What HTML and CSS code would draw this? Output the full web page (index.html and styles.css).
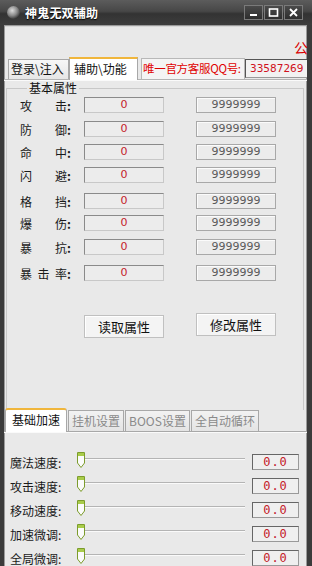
FILE: index.html
```html
<!DOCTYPE html>
<html lang="zh">
<head>
  <meta charset="UTF-8" />
  <title>神鬼无双辅助</title>
  <link rel="stylesheet" href="styles.css">
</head>
<body>
<div class="window">
  <div class="titlebar">
    <span class="app-icon"></span>
    <span class="title">神鬼无双辅助</span>
    <div class="win-btns">
      <span class="win-btn"><svg width="11" height="9" viewBox="0 0 11 9"><rect x="2" y="6" width="7" height="2" fill="#fff"/></svg></span>
      <span class="win-btn"><svg width="11" height="9" viewBox="0 0 11 9"><rect x="1.5" y="1" width="8" height="7" fill="none" stroke="#fff" stroke-width="1.6"/></svg></span>
      <span class="win-btn"><svg width="11" height="9" viewBox="0 0 11 9"><path d="M2 1 L9 8 M9 1 L2 8" stroke="#fff" stroke-width="1.8"/></svg></span>
    </div>
  </div>

  <div class="client">
    <div class="notice"><span>公告</span></div>

    <div class="top-tabs">
      <span class="tab">登录\注入</span>
      <span class="tab active">辅助\功能</span>
      <span class="qq-label">唯一官方客服QQ号:</span>
      <span class="qq-input">33587269</span>
    </div>

    <div class="panel">
      <fieldset class="group">
        <legend>基本属性</legend>
        <div class="row"><span class="label"><i>攻</i><i>击</i></span><span class="colon">:</span><span class="box">0</span><span class="box max">9999999</span></div>
        <div class="row"><span class="label"><i>防</i><i>御</i></span><span class="colon">:</span><span class="box">0</span><span class="box max">9999999</span></div>
        <div class="row gap-s"><span class="label"><i>命</i><i>中</i></span><span class="colon">:</span><span class="box">0</span><span class="box max">9999999</span></div>
        <div class="row gap-s"><span class="label"><i>闪</i><i>避</i></span><span class="colon">:</span><span class="box">0</span><span class="box max">9999999</span></div>
        <div class="row gap-l"><span class="label"><i>格</i><i>挡</i></span><span class="colon">:</span><span class="box">0</span><span class="box max">9999999</span></div>
        <div class="row gap-xs"><span class="label"><i>爆</i><i>伤</i></span><span class="colon">:</span><span class="box">0</span><span class="box max">9999999</span></div>
        <div class="row"><span class="label"><i>暴</i><i>抗</i></span><span class="colon">:</span><span class="box">0</span><span class="box max">9999999</span></div>
        <div class="row gap-l"><span class="label"><i>暴</i><i>击</i><i>率</i></span><span class="colon">:</span><span class="box">0</span><span class="box max">9999999</span></div>

        <div class="actions">
          <button class="btn">读取属性</button>
          <button class="btn up">修改属性</button>
        </div>
      </fieldset>
    </div>

    <div class="bottom-tabs">
      <span class="tab active">基础加速</span>
      <span class="tab dim">挂机设置</span>
      <span class="tab dim">BOOS设置</span>
      <span class="tab dim">全自动循环</span>
    </div>

    <div class="sliders">
      <div class="srow"><span class="slabel">魔法速度:</span><span class="track"><svg class="thumb" width="8" height="16" viewBox="0 0 8 16"><path d="M0.5 0.5 H7.5 V11 L4 15.5 L0.5 11 Z" fill="#fbfbfb" stroke="#7c9c2c"/><rect x="1" y="1" width="6" height="3" fill="#a9cc4a"/></svg></span><span class="val">0.0</span></div>
      <div class="srow"><span class="slabel">攻击速度:</span><span class="track"><svg class="thumb" width="8" height="16" viewBox="0 0 8 16"><path d="M0.5 0.5 H7.5 V11 L4 15.5 L0.5 11 Z" fill="#fbfbfb" stroke="#7c9c2c"/><rect x="1" y="1" width="6" height="3" fill="#a9cc4a"/></svg></span><span class="val">0.0</span></div>
      <div class="srow"><span class="slabel">移动速度:</span><span class="track"><svg class="thumb" width="8" height="16" viewBox="0 0 8 16"><path d="M0.5 0.5 H7.5 V11 L4 15.5 L0.5 11 Z" fill="#fbfbfb" stroke="#7c9c2c"/><rect x="1" y="1" width="6" height="3" fill="#a9cc4a"/></svg></span><span class="val">0.0</span></div>
      <div class="srow"><span class="slabel">加速微调:</span><span class="track"><svg class="thumb" width="8" height="16" viewBox="0 0 8 16"><path d="M0.5 0.5 H7.5 V11 L4 15.5 L0.5 11 Z" fill="#fbfbfb" stroke="#7c9c2c"/><rect x="1" y="1" width="6" height="3" fill="#a9cc4a"/></svg></span><span class="val">0.0</span></div>
      <div class="srow"><span class="slabel">全局微调:</span><span class="track"><svg class="thumb" width="8" height="16" viewBox="0 0 8 16"><path d="M0.5 0.5 H7.5 V11 L4 15.5 L0.5 11 Z" fill="#fbfbfb" stroke="#7c9c2c"/><rect x="1" y="1" width="6" height="3" fill="#a9cc4a"/></svg></span><span class="val">0.0</span></div>
    </div>
  </div>
</div>
</body>
</html>
```

FILE: styles.css
```css
* {
  box-sizing: border-box;
}

body {
  margin: 0;
  padding: 0;
  overflow: hidden;
  background: #3b3b3b;
  font-family: "Noto Sans CJK SC", "DejaVu Sans", sans-serif;
  font-size: 12px;
  color: #1a1a1a;
}

.window {
  width: 312px;
  height: 566px;
  display: flex;
  flex-direction: column;
}

/* title bar */
.titlebar {
  height: 25px;
  flex: none;
  display: flex;
  align-items: center;
  padding: 0 9px 0 7px;
  background: linear-gradient(#5c5c5c, #474747 45%, #333 55%, #3d3d3d);
  color: #fff;
}

.app-icon {
  flex: none;
  width: 13px;
  height: 13px;
  border-radius: 50%;
  background: radial-gradient(circle at 40% 35%, #ddd, #888 45%, #2a2a2a 80%);
  margin-right: 5px;
}

.title {
  font-weight: bold;
  font-size: 12px;
  letter-spacing: 0.2px;
  text-shadow: 0 1px 1px #000;
  white-space: nowrap;
}

.win-btns {
  margin-left: auto;
  display: flex;
  gap: 1px;
}

.win-btn {
  flex: none;
  width: 19px;
  height: 15px;
  display: flex;
  align-items: center;
  justify-content: center;
  border: 1px solid #7a7a7a;
  background: linear-gradient(#4a4a4a, #2e2e2e);
}

/* client area */
.client {
  flex: 1;
  background: #e9e9e9;
  border-left: 4px solid #3b3b3b;
  border-right: 5px solid #3b3b3b;
  box-shadow: inset 1px 0 #9a9a9a, inset -1px 0 #9a9a9a, inset 0 1px #9a9a9a, inset 0 2px #d8d8d8;
  overflow: hidden;
}

.notice {
  height: 33px;
  padding: 12px 0 0 290px;
  color: #d80000;
  font-size: 14px;
  white-space: nowrap;
  overflow: hidden;
}

.top-tabs {
  height: 21px;
  display: flex;
  align-items: flex-end;
  padding-left: 4px;
  position: relative;
  z-index: 1;
  white-space: nowrap;
}

.tab {
  flex: none;
  height: 20px;
  line-height: 18px;
  padding: 0 3px;
  border: 1px solid #a8a8a8;
  border-bottom: none;
  background: linear-gradient(#f7f7f7, #e6e6e6);
  color: #111;
  white-space: nowrap;
}

.top-tabs .tab:first-child {
  width: 61px;
  padding: 0 2px;
}

.tab.active {
  height: 23px;
  margin-bottom: -1px;
  background: #fff;
  border-top: 2px solid #f0b63c;
  line-height: 19px;
  padding: 0 4px;
}

.top-tabs .tab.active {
  width: 69px;
}

.qq-label {
  flex: none;
  height: 21px;
  width: 104px;
  margin-left: 3px;
  line-height: 19px;
  color: #e00000;
  background: #f4f4f4;
  border: 1px solid #b8b8b8;
  border-bottom: none;
  padding-left: 1px;
  font-size: 11.5px;
  letter-spacing: -0.3px;
  white-space: nowrap;
}

.qq-input {
  flex: none;
  height: 19px;
  width: 64px;
  margin-bottom: 1px;
  line-height: 16px;
  padding-left: 4px;
  color: #d01020;
  background: #f2f2f2;
  border: 1px solid #9a9a9a;
  border-top-color: #555;
  border-left-color: #555;
  font-family: "DejaVu Sans", sans-serif;
  font-size: 10.5px;
  white-space: nowrap;
}

.panel {
  height: 329px;
  border-top: 1px solid #b4b4b4;
  box-shadow: inset 0 1px #fafafa;
  padding: 0 3px 0 2px;
}

.group {
  margin: 0;
  padding: 1px 0 0 13px;
  height: 330px;
  border: 1px solid #c8c8c8;
  border-bottom: none;
}

.group legend {
  padding: 0 2px;
  margin-left: 7px;
  line-height: 16px;
  font-size: 12px;
  color: #111;
}

.row {
  display: flex;
  align-items: center;
  height: 16px;
  margin-top: 8px;
}

.row:first-of-type {
  margin-top: 0;
}

.row.gap-s {
  margin-top: 7px;
}

.row.gap-xs {
  margin-top: 6px;
}

.row.gap-l {
  margin-top: 10px;
}

.label {
  width: 47px;
  display: flex;
  justify-content: space-between;
}

.label i {
  font-style: normal;
}

.colon {
  width: 17px;
  font-weight: bold;
}

.box {
  width: 80px;
  height: 16px;
  line-height: 14px;
  text-align: center;
  border: 1px solid #8a8a8a;
  border-right-color: #c8c8c8;
  border-bottom-color: #c8c8c8;
  background: #ececec;
  color: #c4202a;
  font-family: "DejaVu Sans", sans-serif;
  font-size: 11px;
}

.box.max {
  margin-left: 32px;
  border: 1px solid #a8a8a8;
  box-shadow: inset 1px 1px #fbfbfb;
  color: #5a5a5a;
}

.actions {
  display: flex;
  align-items: flex-start;
  margin-top: 34px;
  padding-left: 64px;
  gap: 32px;
}

.btn {
  width: 80px;
  height: 23px;
  margin: 0;
  padding: 0;
  font-family: inherit;
  font-size: 13px;
  color: #111;
  background: #f4f4f4;
  border: 1px solid #c0c0c0;
  border-radius: 0;
  box-shadow: inset 1px 1px #fff;
}

.btn.up {
  margin-top: -2px;
}

/* lower tab strip */
.bottom-tabs {
  height: 24px;
  display: flex;
  align-items: flex-end;
  gap: 1px;
  padding-left: 1px;
  border-bottom: 1px solid #a8a8a8;
  box-shadow: 0 1px #fafafa;
}

.bottom-tabs .tab {
  height: 21px;
  padding: 0 3px;
  line-height: 19px;
}

.bottom-tabs .tab.active {
  height: 24px;
  padding: 0 6px;
  line-height: 20px;
  font-size: 12px;
  border-radius: 3px 3px 0 0;
}

.tab.dim {
  color: #8a8a8a;
  background: linear-gradient(#f2f2f2, #e4e4e4);
}

.sliders {
  padding: 22px 0 0 6px;
}

.srow {
  display: flex;
  align-items: center;
  height: 16px;
  margin-bottom: 8px;
}

.slabel {
  width: 67px;
  white-space: nowrap;
}

.track {
  width: 168px;
  height: 16px;
  position: relative;
  background: linear-gradient(transparent 4px, #b4b4b4 4px, #b4b4b4 5px, #fafafa 5px, #fafafa 6px, transparent 6px);
  background-size: 161px 16px;
  background-position: 7px 0;
  background-repeat: no-repeat;
}

.thumb {
  position: absolute;
  left: 0;
  top: -2px;
}

.val {
  width: 47px;
  height: 16px;
  margin-left: 7px;
  line-height: 14px;
  text-align: center;
  border: 1px solid #666;
  border-right-color: #999;
  border-bottom-color: #999;
  background: #efefef;
  color: #c4202a;
  font-family: "DejaVu Sans Mono", monospace;
  font-size: 12px;
  letter-spacing: 1px;
}
```
